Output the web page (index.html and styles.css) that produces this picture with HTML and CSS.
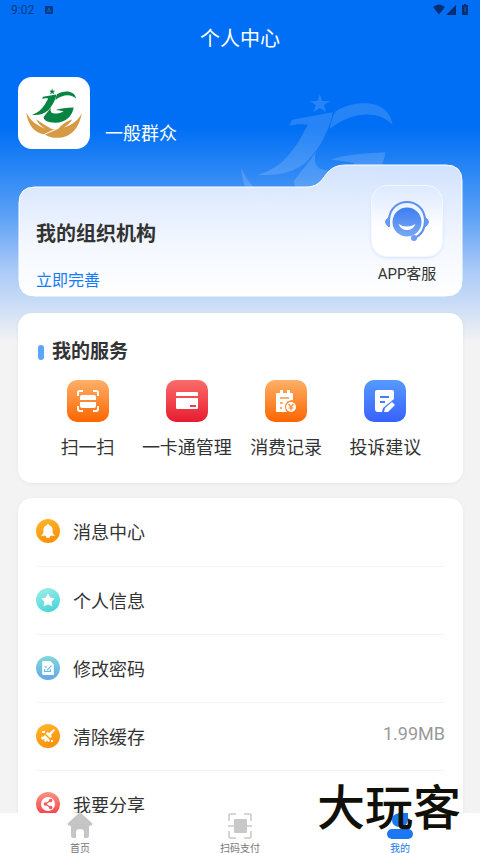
FILE: index.html
```html
<!DOCTYPE html>
<html lang="zh-CN">
<head>
<meta charset="utf-8">
<meta name="viewport" content="width=device-width, initial-scale=1">
<title>个人中心</title>
<link rel="stylesheet" href="styles.css">
</head>
<body>
<svg class="defs" aria-hidden="true">
  <symbol id="mark" viewBox="20 280 530 465">
    <g class="mark-letters">
      <path d="M268 284L275 304H298L280 317L287 338L268 325L249 338L256 317L240 304H261Z"/>
      <path d="M185 360L307 338C298 390 268 445 230 485C190 520 140 530 80 525C120 515 150 495 175 465C205 430 215 405 232 375C210 372 190 374 176 378Z"/>
      <path d="M314 336C370 300 475 295 486 376C450 335 370 330 298 388C300 370 306 350 314 336Z"/>
      <path d="M300 480C340 465 400 462 465 458C450 540 390 597 300 597C225 597 190 575 190 545C210 515 235 490 257 455C248 485 255 512 290 512C325 512 355 505 372 491C350 485 325 482 300 480Z"/>
    </g>
    <g class="mark-hands">
      <path d="M31 504C45 610 100 690 190 702L290 657C250 655 190 605 121 564C140 605 170 630 205 652C130 625 65 575 31 504Z"/>
      <path d="M538 507C520 630 450 735 310 735C265 735 230 725 202 704L322 655C370 600 410 580 451 567C435 600 400 625 375 640C450 620 510 570 538 507Z"/>
    </g>
  </symbol>
  <linearGradient id="folderFill" x1="0" y1="0" x2="0" y2="1"><stop offset="0" stop-color="#d6e5fd" stop-opacity=".97"/><stop offset=".6" stop-color="#f3f7ff"/><stop offset="1" stop-color="#fff"/></linearGradient>
  <linearGradient id="faceFill" x1="0" y1="0" x2="0" y2="1"><stop offset="0" stop-color="#3c7ff0"/><stop offset="1" stop-color="#7ba6f6"/></linearGradient>
</svg>
<div class="page">
  <svg class="backdrop-mark" aria-hidden="true"><use href="#mark"/></svg>
  <div class="status">
    <span>9:02</span>
    <svg class="status-app" viewBox="0 0 8 8"><rect width="8" height="8" rx="1" fill="currentColor"/><path d="M2 6L4 2L6 6M3 5H5" fill="none" stroke="#1266cf"/></svg>
    <svg class="status-icons" viewBox="0 0 36 12" fill="currentColor"><path d="M0 3Q6-2 12 3L6 10.500Z"/><path d="M23 1V11H13Z"/><path d="M30 1H31V0H33V1H35V11H29V1Z"/><path d="M32 3V8" stroke="#1266cf"/></svg>
  </div>
  <header class="title"><h1>个人中心</h1></header>
  <main class="content">
    <section class="profile">
      <div class="avatar"><svg><use href="#mark"/></svg></div>
      <span class="name">一般群众</span>
    </section>
    <section class="folder">
      <svg class="folder-shape" viewBox="0 0 445 132" preserveAspectRatio="none" aria-hidden="true"><path d="M1 38Q1 22 17 22H288C310 22 303 0 328 0H428Q444 0 444 16V115Q444 131 428 131H17Q1 131 1 115Z" fill="url(#folderFill)" stroke="#fff"/></svg>
      <div class="org">
        <h2>我的组织机构</h2>
        <a href="#complete">立即完善</a>
      </div>
      <button class="support" type="button">
        <span class="support-icon"><svg viewBox="0 0 46 42">
          <circle cx="23" cy="22" r="14.500" fill="url(#faceFill)"/>
          <path d="M5 27V20C6-4 40-4 41 20C41 31 36 36 30 38" fill="none" stroke="#5b90f2" stroke-width="2"/>
          <path d="M5 17Q-2 22 5 27ZM41 17Q48 22 41 27Z" fill="#6699f4" stroke="#6699f4"/>
          <circle cx="30" cy="38" r="3" fill="#6d9df5"/>
          <path d="M14.500 24Q23 29 31.500 24Q29 30 23 30Q17 30 14.500 24Z" fill="#fff"/>
        </svg></span>
        <span>APP客服</span>
      </button>
    </section>
    <section class="card services">
      <h2>我的服务</h2>
      <div class="grid">
        <button type="button"><span class="tile orange"><svg viewBox="0 0 22 22"><path d="M1 6V3Q1 1 3 1H6M16 1H19Q21 1 21 3V6M21 16V19Q21 21 19 21H16M6 21H3Q1 21 1 19V16" fill="none" stroke="#fff" stroke-width="2"/><path d="M5 5H17Q19 5 19 7V10H3V7Q3 5 5 5ZM3 12H19V16Q19 18 17 18H5Q3 18 3 16Z" fill="#fff"/></svg></span><span>扫一扫</span></button>
        <button type="button"><span class="tile red"><svg viewBox="0 0 22 22"><path d="M1 2H21Q22 2 22 3V6H0V3Q0 2 1 2ZM0 8H22V18Q22 19 21 19H1Q0 19 0 18Z" fill="#fff"/><path d="M14 16H20" stroke="#ec3c48" stroke-width="2"/></svg></span><span>一卡通管理</span></button>
        <button type="button"><span class="tile orange"><svg viewBox="0 0 22 22"><path d="M2 3H5V0H8V3H12V0H15V3H17Q18 3 18 4V10Q11 10 10 16Q10 20 12 22H2Q1 22 1 21V4Q1 3 2 3Z" fill="#fff"/><path d="M5 8H14M5 13H8M5 18H7" stroke="#fd923d" stroke-width="1.500"/><circle cx="16" cy="17" r="5" fill="#fff"/><path d="M13.500 14L16 17L18.500 14M16 17V20.500M13.500 18H18.500" fill="none" stroke="#fc842b" stroke-width="1.200"/></svg></span><span>消费记录</span></button>
        <button type="button"><span class="tile blue"><svg viewBox="0 0 22 22"><path d="M3 0H18Q20 0 20 2V9L9 18L8 22H4Q1 22 1 19V2Q1 0 3 0Z" fill="#fff"/><path d="M6 7H15M6 12H11" stroke="#467cff" stroke-width="2"/><path d="M10 22L11 18L18 12L21 15L14 22Z" fill="#fff"/></svg></span><span>投诉建议</span></button>
      </div>
    </section>
    <ul class="card list">
      <li><a href="#messages"><span class="dot amber"><svg viewBox="0 0 12 12" fill="#fff"><path d="M6 0Q7 0 7 1Q10 2 10 5V8L12 10H0L2 8V5Q2 2 5 1Q5 0 6 0ZM4 10H8Q8 12 6 12Q4 12 4 10Z"/></svg></span><span>消息中心</span></a></li>
      <li><a href="#info"><span class="dot aqua"><svg viewBox="0 0 12 12"><path d="M6 1L7.500 4.300L11 4.700L8.500 7.200L9.200 10.800L6 9.100L2.800 10.800L3.500 7.200L1 4.700L4.500 4.300Z" fill="#fff" stroke="#fff" stroke-linejoin="round"/></svg></span><span>个人信息</span></a></li>
      <li><a href="#password"><span class="dot sky"><svg viewBox="0 0 12 12"><path d="M2 0H8L11 3V12H2Q1 12 1 11V1Q1 0 2 0Z" fill="#fff"/><path d="M3 5H5M3 7V9H8V7M5 8L9 4" fill="none" stroke="#68b7e0"/></svg></span><span>修改密码</span></a></li>
      <li><a href="#cache"><span class="dot amber"><svg viewBox="0 0 14 14" fill="#fff"><path d="M13 0L14 1L10 6L11 8L9 9L5 5L6 3L8 4ZM4 6L8 10Q10 12 7 13L6 11L5 13L3 12L4 10L1 11L0 8Q3 8 4 6ZM1 2H4V4H1ZM10 11H12V13H10Z"/></svg></span><span>清除缓存</span><span class="value">1.99MB</span></a></li>
      <li><a href="#share"><span class="dot coral"><svg viewBox="0 0 16 16"><circle cx="8" cy="8" r="8" fill="#fff"/><path d="M11 4L5 8L11 12" fill="none" stroke="#f65a58" stroke-width="1.500"/><circle cx="11" cy="4" r="2" fill="#f65a58"/><circle cx="5" cy="8" r="2" fill="#f65a58"/><circle cx="11" cy="12" r="2" fill="#f65a58"/></svg></span><span>我要分享</span></a></li>
    </ul>
  </main>
  <nav class="tabs">
    <a href="#home"><svg viewBox="0 0 26 26"><path d="M11 1Q13-1 15 1L25 10Q26 13 22 13V23Q22 25 20 25H17V19Q17 16 13 16Q9 16 9 19V25H6Q4 25 4 23V13Q0 13 1 10Z" fill="#c5c5c5"/></svg>首页</a>
    <a href="#scan"><svg viewBox="0 0 26 26"><rect x="7" y="6" width="13" height="14" rx="1" fill="#c8c8c8"/><path d="M2 8V3Q2 1 4 1H9M17 1H22Q24 1 24 3V8M24 18V23Q24 25 22 25H17M9 25H4Q2 25 2 23V18M1 13H25" fill="none" stroke="#c8c8c8" stroke-width="1.500"/></svg>扫码支付</a>
    <a class="active" href="#mine"><svg viewBox="0 0 26 26" fill="#1c78f2"><path d="M13 0H21V7Q20 14 13 14Q5 14 5 7Q5 1 13 0Z"/><rect x="0" y="16" width="26" height="10" rx="5"/></svg>我的</a>
  </nav>
  <div class="stamp">大玩客</div>
</div>
</body>
</html>
```

FILE: styles.css
```css
* { box-sizing: border-box; }

body {
  margin: 0;
  font-family: Roboto, "Noto Sans CJK SC", sans-serif;
  font-size: 18px;
  line-height: 24px;
  color: #333;
  background: #f3f3f3;
}

h1, h2, ul { margin: 0; padding: 0; }
svg { display: block; }
a { color: inherit; text-decoration: none; }
button { border: 0; padding: 0; background: none; font: inherit; color: inherit; }

.defs { position: absolute; width: 0; height: 0; }

.page {
  position: relative;
  display: flex;
  flex-direction: column;
  height: 100vh;
  overflow: hidden;
  background: linear-gradient(#006ff5 0, #006ff5 128px, #2483f5 164px, #5b9ff5 215px, #a9caf7 270px, #cbddf6 305px, #f3f3f3 342px);
}

.backdrop-mark {
  position: absolute;
  top: 93px;
  left: 50%;
  width: 177px;
  height: 155px;
  margin-left: -3px;
  fill: #fff;
  opacity: .15;
}

.status {
  position: relative;
  display: flex;
  align-items: center;
  gap: 11px;
  height: 20px;
  padding: 0 11px;
  font-size: 12px;
  line-height: 20px;
  color: #073a86;
}
.status-app { width: 8px; height: 8px; }
.status-icons { width: 36px; height: 12px; margin-left: auto; color: #062e70; }

.title { height: 36px; text-align: center; }
.title h1 { font-size: 20px; line-height: 38px; font-weight: 400; color: #fff; }

.content {
  position: relative;
  flex: 1;
  min-height: 0;
  overflow-y: auto;
  scrollbar-width: none;
  padding: 21px 17px 0 18px;
}

.profile { display: flex; align-items: flex-end; gap: 15px; }
.avatar {
  --letters: #078442;
  --hands: #d69a45;
  display: grid;
  place-items: center;
  width: 72px;
  height: 72px;
  border-radius: 14px;
  background: #fff;
}
.avatar svg { width: 58px; height: 51px; }
.mark-letters { fill: var(--letters, #fff); }
.mark-hands { fill: var(--hands, #fff); }
.name { padding-bottom: 3px; color: #fff; }

.folder {
  position: relative;
  display: flex;
  justify-content: space-between;
  height: 132px;
  margin-top: 16px;
  padding: 20px 20px 0 18px;
}
.folder-shape { position: absolute; inset: 0; width: 100%; height: 100%; overflow: visible; }
.org { position: relative; padding-top: 37px; }
.org h2 { font-size: 20px; line-height: 24px; font-weight: 700; }
.org a { display: block; margin-top: 23px; font-size: 16px; line-height: 24px; color: #167bf5; }
.support {
  position: relative;
  display: flex;
  flex-direction: column;
  align-items: center;
  align-self: flex-start;
  gap: 5px;
  font-size: 15px;
}
.support-icon {
  display: grid;
  place-items: center;
  width: 72px;
  height: 72px;
  border: 1px solid #f3f8ff;
  border-radius: 16px;
  background: linear-gradient(#dce9ff, #fff 60%);
  box-shadow: 0 1px 3px #d5e2fa;
}
.support-icon svg { width: 46px; height: 42px; }

.card { border-radius: 14px; background: #fff; box-shadow: 0 1px 4px rgba(0, 0, 0, .05); }

.services { margin-top: 16px; padding: 27px 28px 23px 20px; }
.services h2 {
  display: flex;
  align-items: center;
  gap: 8px;
  font-size: 19px;
  line-height: 24px;
  font-weight: 700;
}
.services h2::before { content: ""; width: 6px; height: 15px; border-radius: 3px; background: #5ba5fc; }
.grid { display: grid; grid-template-columns: repeat(4, 1fr); margin-top: 16px; }
.grid button { display: flex; flex-direction: column; align-items: center; gap: 14px; white-space: nowrap; }
.tile { display: grid; place-items: center; width: 42px; height: 42px; border-radius: 10px; }
.tile svg { width: 22px; height: 22px; }
.orange { background: linear-gradient(#fdb068, #fd6500); }
.red { background: linear-gradient(#fb6c69, #e71c30); }
.blue { background: linear-gradient(#559aff, #3861ff); }

.list { margin-top: 15px; padding: 0 18px; list-style: none; }
.list li + li { border-top: 1px solid #f4f4f4; }
.list a { display: flex; align-items: center; gap: 13px; height: 68px; padding-top: 2px; }
.list li + li a { height: 67px; }
.dot { display: grid; place-items: center; width: 24px; height: 24px; margin-bottom: 4px; border-radius: 50%; }
.dot svg { width: 14px; height: 14px; }
.amber { background: linear-gradient(160deg, #ffb92e, #f98a06); }
.aqua { background: linear-gradient(160deg, #a1efe6, #3fd2d9); }
.sky { background: linear-gradient(#83d8d7, #61a7ec); }
.coral { background: linear-gradient(#f79482, #f63e48); }
.value { margin: 0 0 8px auto; color: #999; }

.tabs { position: relative; display: grid; grid-template-columns: repeat(3, 1fr); height: 40px; background: #fff; }
.tabs a { display: flex; flex-direction: column; align-items: center; gap: 4px; font-size: 10px; line-height: 12px; color: #777; }
.tabs svg { width: 26px; height: 26px; flex: none; }
.tabs .active { color: #1c78f2; }

.stamp {
  position: absolute;
  right: 19px;
  bottom: 20px;
  font-size: 48px;
  line-height: 48px;
  font-weight: 500;
  color: #100f08;
  pointer-events: none;
}
```
